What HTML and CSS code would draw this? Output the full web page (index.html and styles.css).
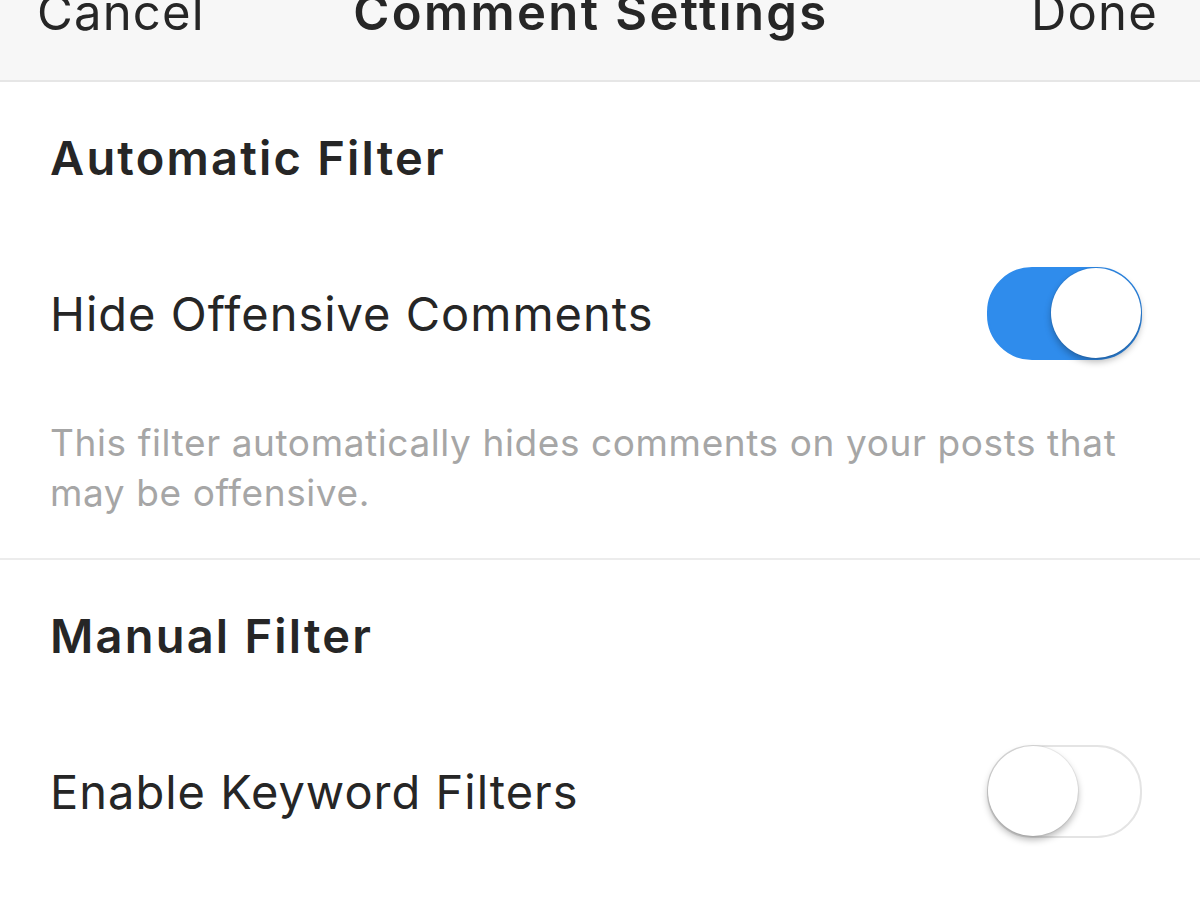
FILE: index.html
```html
<!DOCTYPE html>
<html lang="en">
<head>
    <meta charset="UTF-8">
    <meta name="viewport" content="width=device-width, initial-scale=1.0">
    <title>Comment Settings</title>
    <link rel="stylesheet" href="styles.css">
</head>
<body>
    <header class="nav-bar">
        <span class="nav-btn">Cancel</span>
        <span class="nav-title">Comment Settings</span>
        <span class="nav-btn">Done</span>
    </header>
    <main>
        <section class="group">
            <h2 class="group-title">Automatic Filter</h2>
            <div class="row">
                <span class="row-label">Hide Offensive Comments</span>
                <div class="switch on"><div class="knob"></div></div>
            </div>
            <p class="note">This filter automatically hides comments on your posts that may be offensive.</p>
        </section>
        <section class="group">
            <h2 class="group-title">Manual Filter</h2>
            <div class="row">
                <span class="row-label">Enable Keyword Filters</span>
                <div class="switch"><div class="knob"></div></div>
            </div>
            <p class="note">Hide comments that contain any of the words or phrases you choose.</p>
        </section>
    </main>
</body>
</html>
```

FILE: styles.css
```css
body {
    margin: 0;
    padding: 0;
    background-color: #ffffff;
    font-family: Inter, "Liberation Sans", sans-serif;
    color: #262626;
    overflow: hidden;
}
.nav-bar {
    height: 80px;
    background-color: #f7f7f7;
    border-bottom: 2px solid #e6e6e6;
    display: flex;
    justify-content: space-between;
    align-items: flex-start;
    padding: 0 42px 0 37px;
    font-size: 49px;
    line-height: 49px;
    letter-spacing: 1.2px;
}
.nav-btn, .nav-title {
    margin-top: -12px;
}
.nav-title {
    font-weight: 600;
    margin-right: 54px;
    letter-spacing: 2.4px;
}
.group {
    padding: 51px 58px 40px 50px;
    border-bottom: 2px solid #ececec;
}
.group-title {
    margin: 0;
    font-size: 47px;
    line-height: 50px;
    font-weight: 600;
    letter-spacing: 2.2px;
}
.row {
    height: 100px;
    margin-top: 80px;
    display: flex;
    align-items: center;
    justify-content: space-between;
}
.row-label {
    font-size: 47px;
    letter-spacing: 1px;
}
.note {
    margin: 55px 0 0;
    padding-right: 12px;
    font-size: 37px;
    line-height: 50px;
    letter-spacing: 0.6px;
    color: #a6a6a6;
}
.switch {
    position: relative;
    width: 151px;
    height: 89px;
    border-radius: 45px;
    border: 2px solid #e4e4e4;
    background-color: #ffffff;
}
.switch.on {
    background-color: #2f8cec;
    border-color: #2f8cec;
}
.knob {
    position: absolute;
    top: -1px;
    left: -1px;
    width: 90px;
    height: 90px;
    border-radius: 50%;
    background-color: #ffffff;
    box-shadow: 0 4px 7px rgba(0, 0, 0, 0.28), 0 0 0 1px rgba(0, 0, 0, 0.06);
}
.switch.on .knob {
    left: auto;
    right: -1px;
}
```
